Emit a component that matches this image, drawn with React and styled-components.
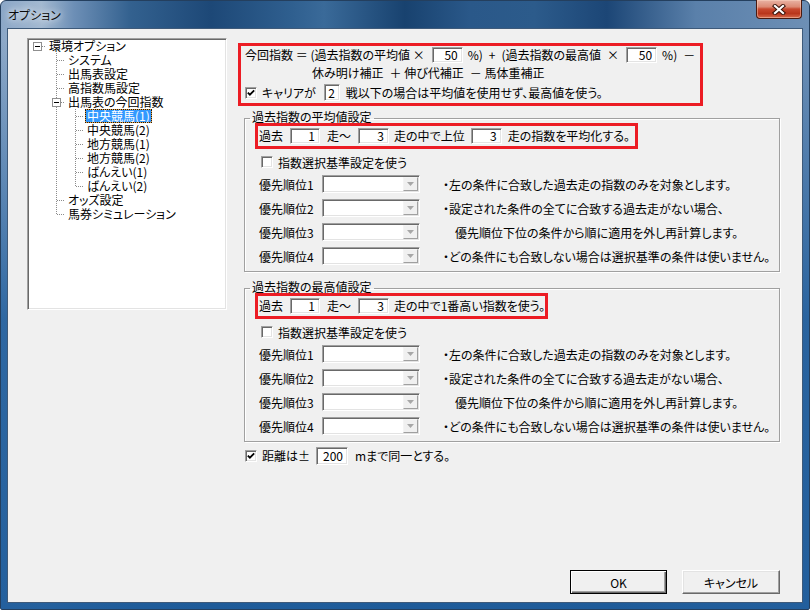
import React from 'react';
import styled, { createGlobalStyle, css } from 'styled-components';

const GlobalStyle = createGlobalStyle`
  html, body {
    margin: 0;
    padding: 0;
    background: #ffffff;
  }
  body {
    font-family: "Noto Sans CJK JP", "Noto Sans", sans-serif;
    font-size: 12px;
    font-feature-settings: "palt";
    color: #000;
  }
`;

const red = '#ec1c24';

const sunken = css`
  box-sizing: border-box;
  border: 1px solid;
  border-color: #a0a0a0 #ffffff #ffffff #a0a0a0;
  box-shadow: inset 1px 1px 0 #696969, inset -1px -1px 0 #e3e3e3;
  background: #ffffff;
`;

// window chrome

const Window = styled.div`
  width: 810px;
  height: 610px;
  box-sizing: border-box;
  display: flex;
  flex-direction: column;
  padding: 0 6px 6px;
  border: 1px solid #243f5e;
  border-radius: 6px 6px 2px 2px;
  background:
    linear-gradient(180deg, rgba(26, 86, 148, 0) 0px, rgba(26, 86, 148, 0) 40px, rgba(30, 92, 155, 0.85) 320px, rgba(30, 92, 155, 0.95) 100%),
    linear-gradient(
      90deg,
      #8ba7c7 0%,
      #a3b9d1 5%,
      #6d8fb6 9%,
      #33618f 16%,
      #1d4877 26%,
      #2f5f8f 36%,
      #3a6a99 40%,
      #18426f 50%,
      #2a5889 58%,
      #2c5b8b 66%,
      #1c4676 75%,
      #5a80aa 86%,
      #6d8fb5 100%
    );
`;

const TitleBar = styled.div`
  height: 27px;
  display: flex;
  justify-content: space-between;
  align-items: flex-start;
`;

const TitleText = styled.div`
  align-self: center;
  padding-left: 1px;
  margin-top: 1px;
  font-size: 12px;
  line-height: 14px;
  color: #0a0a0a;
  text-shadow: 0 0 6px rgba(255, 255, 255, 0.95), 0 0 10px rgba(255, 255, 255, 0.8);
`;

const CloseButton = styled.div`
  width: 46px;
  height: 19px;
  margin: -1px 1px 0 0;
  box-sizing: border-box;
  display: flex;
  align-items: center;
  justify-content: center;
  border: 1px solid #4a1a10;
  border-top: none;
  border-radius: 0 0 4px 4px;
  background: linear-gradient(180deg, #e9b3a4 0%, #dc8a74 38%, #c8492f 50%, #b9361c 75%, #d66a4c 100%);
  box-shadow: inset 0 0 0 1px rgba(255, 220, 200, 0.45);
`;

const Client = styled.div`
  flex: 1;
  display: flex;
  min-height: 0;
  background: #f0f0f0;
  border: 1px solid #3e5a7a;
`;

// tree

const Tree = styled.div`
  ${sunken};
  width: 200px;
  height: 272px;
  margin: 9px 0 0 19px;
  flex-shrink: 0;
`;

const TreeRow = styled.div`
  display: flex;
  align-items: center;
  height: 14px;
`;

const TreeLabel = styled.span`
  box-sizing: border-box;
  height: 14px;
  padding: 0 2px;
  line-height: 14px;
  white-space: nowrap;
  ${(p) =>
    p.$selected &&
    css`
      background: #3399ff;
      color: #ffffff;
      box-shadow: inset 0 0 0 1px #e8a03c;
      outline: 1px dotted #1a1a1a;
      outline-offset: -1px;
    `}
`;

const TreeCell = ({ kind }) => {
  const dot = { stroke: '#8c8c8c', strokeWidth: 1, strokeDasharray: '1 1', shapeRendering: 'crispEdges' };
  return (
    <svg width="19" height="14" viewBox="0 0 19 14" style={{ flexShrink: 0, display: 'block' }}>
      {(kind === 'tee' || kind === 'pipe' || kind === 'teeBox') && <line x1="9.5" y1="0" x2="9.5" y2="14" {...dot} />}
      {kind === 'ell' && <line x1="9.5" y1="0" x2="9.5" y2="8" {...dot} />}
      {(kind === 'tee' || kind === 'ell' || kind === 'teeBox' || kind === 'root') && (
        <line x1="10" y1="7.5" x2="18" y2="7.5" {...dot} />
      )}
      {(kind === 'root' || kind === 'teeBox') && (
        <g shapeRendering="crispEdges">
          <rect x="5.5" y="3.5" width="8" height="8" fill="#ffffff" stroke="#8f8f8f" />
          <line x1="7" y1="7.5" x2="12" y2="7.5" stroke="#000000" />
        </g>
      )}
    </svg>
  );
};

const treeRows = [
  { label: '環境オプション', cells: ['root'] },
  { label: 'システム', cells: ['blank', 'tee'] },
  { label: '出馬表設定', cells: ['blank', 'tee'] },
  { label: '高指数馬設定', cells: ['blank', 'tee'] },
  { label: '出馬表の今回指数', cells: ['blank', 'teeBox'] },
  { label: '中央競馬(1)', cells: ['blank', 'pipe', 'tee'], selected: true },
  { label: '中央競馬(2)', cells: ['blank', 'pipe', 'tee'] },
  { label: '地方競馬(1)', cells: ['blank', 'pipe', 'tee'] },
  { label: '地方競馬(2)', cells: ['blank', 'pipe', 'tee'] },
  { label: 'ばんえい(1)', cells: ['blank', 'pipe', 'tee'] },
  { label: 'ばんえい(2)', cells: ['blank', 'pipe', 'ell'] },
  { label: 'オッズ設定', cells: ['blank', 'tee'] },
  { label: '馬券シミュレーション', cells: ['blank', 'ell'] },
];

// right side

const Settings = styled.div`
  flex: 1;
  display: flex;
  flex-direction: column;
  margin-left: 11px;
  padding: 14px 23px 8px 0;
`;

const RedBox = styled.div`
  box-sizing: border-box;
  width: ${(p) => p.$width}px;
  border: 3px solid ${red};
  padding-left: ${(p) => p.$pad || 0}px;
  margin-left: ${(p) => p.$indent || 0}px;
  display: flex;
  flex-direction: column;
`;

const Line = styled.div`
  display: flex;
  align-items: center;
  height: ${(p) => p.$h || 18}px;
  padding-left: ${(p) => p.$indent || 0}px;
  margin-top: ${(p) => p.$mt || 0}px;
  white-space: pre;
  line-height: 14px;
`;

const NumBox = styled.div`
  ${sunken};
  width: ${(p) => p.$w}px;
  height: ${(p) => p.$h || 16}px;
  margin: 0 ${(p) => p.$mr ?? 6}px 0 ${(p) => p.$ml ?? 6}px;
  padding-right: 4px;
  display: flex;
  align-items: center;
  justify-content: flex-end;
  font-size: 12px;
  line-height: 12px;
  flex-shrink: 0;
`;

const CheckBox = styled.div`
  ${sunken};
  width: 12px;
  height: 12px;
  display: flex;
  align-items: center;
  justify-content: center;
  flex-shrink: 0;
  margin-right: 5px;
`;

const Check = ({ checked }) => (
  <CheckBox>
    {checked && (
      <svg width="8" height="8" viewBox="0 0 8 8">
        <polyline points="0.8,3.6 2.9,5.7 7.2,1.4" fill="none" stroke="#000" strokeWidth="1.8" />
      </svg>
    )}
  </CheckBox>
);

const Group = styled.fieldset`
  box-sizing: border-box;
  width: 536px;
  margin: ${(p) => p.$mt}px 0 0 6px;
  padding: 0 0 6px;
  min-inline-size: 0;
  border: 1px solid #a0a0a0;
  box-shadow: 1px 1px 0 #ffffff, inset 1px 1px 0 #ffffff;
`;

const Legend = styled.legend`
  margin-left: 5px;
  padding: 0 2px 2px;
  line-height: 8px;
  font-size: 12px;
`;

const CheckRow = styled.div`
  display: flex;
  align-items: center;
  height: 14px;
  margin-top: 6px;
  padding-left: 16px;
`;

const PriorityRow = styled.div`
  display: flex;
  align-items: center;
  height: 18px;
  margin-top: 6px;
  padding-left: 14px;
  white-space: nowrap;
`;

const PriorityLabel = styled.span`
  width: 63px;
  flex-shrink: 0;
`;

const Combo = styled.div`
  ${sunken};
  width: 98px;
  height: 18px;
  padding: 1px;
  display: flex;
  justify-content: flex-end;
  flex-shrink: 0;
`;

const DropButton = styled.div`
  box-sizing: border-box;
  width: 15px;
  height: 100%;
  display: flex;
  align-items: center;
  justify-content: center;
  background: #f0f0f0;
  border: 1px solid;
  border-color: #f4f4f4 #a0a0a0 #a0a0a0 #f4f4f4;
`;

const Note = styled.span`
  margin-left: 23px;
`;

const FooterRow = styled.div`
  margin-top: auto;
  display: flex;
  justify-content: flex-end;
  gap: 15px;
`;

const Button = styled.div`
  box-sizing: border-box;
  width: ${(p) => p.$w}px;
  height: 24px;
  display: flex;
  align-items: center;
  justify-content: center;
  background: #f0f0f0;
  border: 1px solid;
  border-color: #ffffff #696969 #696969 #ffffff;
  box-shadow: inset -1px -1px 0 #a0a0a0, inset 1px 1px 0 #e3e3e3;
  ${(p) =>
    p.$primary &&
    css`
      border: 1px solid #000000;
      box-shadow: inset 1px 1px 0 #ffffff, inset -1px -1px 0 #696969, inset -2px -2px 0 #a0a0a0;
    `}
`;

const Priorities = () => {
  const notes = [
    '・左の条件に合致した過去走の指数のみを対象とします。',
    '・設定された条件の全てに合致する過去走がない場合、',
    '　優先順位下位の条件から順に適用を外し再計算します。',
    '・どの条件にも合致しない場合は選択基準の条件は使いません。',
  ];
  return (
    <>
      <CheckRow>
        <Check />
        <span>指数選択基準設定を使う</span>
      </CheckRow>
      {notes.map((note, i) => (
        <PriorityRow key={i}>
          <PriorityLabel>優先順位{i + 1}</PriorityLabel>
          <Combo>
            <DropButton>
              <svg width="7" height="4" viewBox="0 0 7 4">
                <polygon points="0,0 7,0 3.5,4" fill="#a7a7a7" />
              </svg>
            </DropButton>
          </Combo>
          <Note>{note}</Note>
        </PriorityRow>
      ))}
    </>
  );
};

export default function App() {
  return (
    <>
      <GlobalStyle />
      <Window>
        <TitleBar>
          <TitleText>オプション</TitleText>
          <CloseButton>
            <svg width="14" height="11" viewBox="0 0 14 11">
              <path d="M3 2 L11 9 M11 2 L3 9" stroke="#3b1309" strokeWidth="4.2" strokeLinecap="square" />
              <path d="M3 2 L11 9 M11 2 L3 9" stroke="#ffffff" strokeWidth="2.2" strokeLinecap="square" />
            </svg>
          </CloseButton>
        </TitleBar>

        <Client>
          <Tree>
            {treeRows.map((row) => (
              <TreeRow key={row.label}>
                {row.cells.map((kind, i) => (
                  <TreeCell key={i} kind={kind} />
                ))}
                <TreeLabel $selected={row.selected}>{row.label}</TreeLabel>
              </TreeRow>
            ))}
          </Tree>

          <Settings>
            <RedBox $width={465} $pad={4}>
              <Line $h={18}>
                <span>今回指数 ＝ (過去指数の平均値 ×</span>
                <NumBox $w={31} $ml={7} $mr={5}>50</NumBox>
                <span>{'%)\u2002+\u2002(過去指数の最高値\u2002×'}</span>
                <NumBox $w={31} $ml={7} $mr={5}>50</NumBox>
                <span>{'%)\u2002－'}</span>
              </Line>
              <Line $h={18} $indent={67}>
                {'休み明け補正\u2002＋ 伸び代補正\u2002－ 馬体重補正'}
              </Line>
              <Line $h={21}>
                <Check checked />
                <span>キャリアが</span>
                <NumBox $w={16} $h={17} $ml={8} $mr={6}>2</NumBox>
                <span>戦以下の場合は平均値を使用せず、最高値を使う。</span>
              </Line>
            </RedBox>

            <Group $mt={7}>
              <Legend>過去指数の平均値設定</Legend>
              <RedBox $width={383} $pad={1} $indent={10}>
                <Line $h={20}>
                  <span>過去</span>
                  <NumBox $w={30} $ml={7} $mr={7}>1</NumBox>
                  <span>走～</span>
                  <NumBox $w={31} $ml={7} $mr={5}>3</NumBox>
                  <span>走の中で上位</span>
                  <NumBox $w={31}>3</NumBox>
                  <span>走の指数を平均化する。</span>
                </Line>
              </RedBox>
              <Priorities />
            </Group>

            <Group $mt={11}>
              <Legend>過去指数の最高値設定</Legend>
              <RedBox $width={293} $pad={1} $indent={10}>
                <Line $h={20}>
                  <span>過去</span>
                  <NumBox $w={30} $ml={7} $mr={7}>1</NumBox>
                  <span>走～</span>
                  <NumBox $w={31} $ml={7} $mr={5}>3</NumBox>
                  <span>走の中で1番高い指数を使う。</span>
                </Line>
              </RedBox>
              <Priorities />
            </Group>

            <Line $h={18} $indent={7} $mt={5}>
              <Check checked />
              <span>距離は±</span>
              <NumBox $w={32} $h={18} $ml={6} $mr={7}>200</NumBox>
              <span>mまで同一とする。</span>
            </Line>

            <FooterRow>
              <Button $w={97} $primary>OK</Button>
              <Button $w={98}>キャンセル</Button>
            </FooterRow>
          </Settings>
        </Client>
      </Window>
    </>
  );
}
